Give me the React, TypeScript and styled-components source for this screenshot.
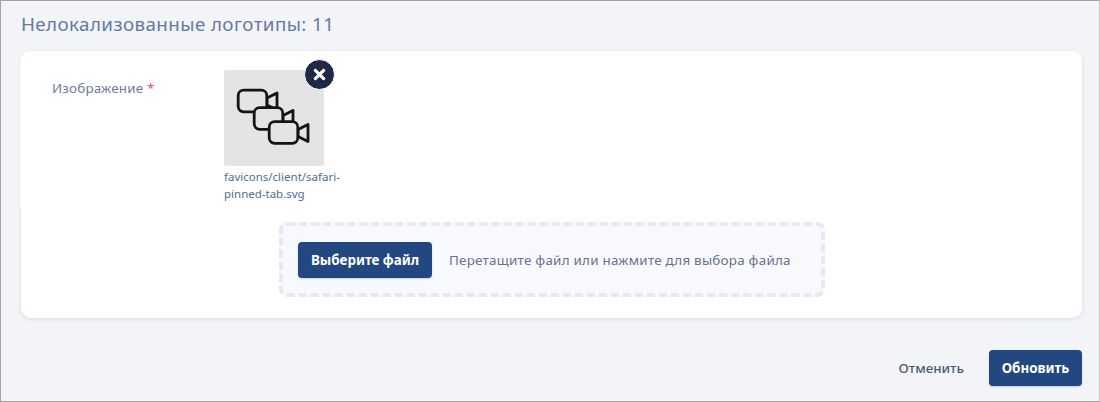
import styled, { createGlobalStyle } from "styled-components";
import { FaTimes } from "react-icons/fa";

const Global = createGlobalStyle`
  html, body { margin: 0; padding: 0; }
  body {
    width: 1100px;
    height: 402px;
    overflow: hidden;
    font-family: "Noto Sans", "Open Sans", sans-serif;
  }
`;

const Frame = styled.div`
  box-sizing: border-box;
  width: 1100px;
  height: 402px;
  padding: 0 17px 14px 20px;
  display: flex;
  flex-direction: column;
  background: #f3f4f8;
  border: 1px solid #a3a3a3;
  border-right-color: #c4c4c4;
`;

const Title = styled.h2`
  margin: 0;
  height: 50px;
  line-height: 47px;
  font-size: 18.8px;
  letter-spacing: 0.4px;
  font-weight: 400;
  color: #667b9c;
`;

const Card = styled.section`
  height: 267px;
  border-radius: 10px;
  background: #fff;
  box-shadow: 0 1px 4px rgba(30, 40, 70, 0.12);
  display: flex;
  flex-direction: column;
`;

const ImageRow = styled.div`
  box-sizing: border-box;
  height: 156px;
  margin-left: -1px;
  padding: 19px 0 0 32px;
  display: flex;
  background: #fff;
  border-radius: 10px 10px 0 0;
`;

const Label = styled.div`
  width: 172px;
  padding-top: 9px;
  font-size: 13.4px;
  letter-spacing: 0.2px;
  line-height: 18px;
  color: #6b7c97;
`;

const Required = styled.span`
  color: #e25563;
`;

const Preview = styled.div`
  position: relative;
  width: 124px;
`;

const Thumb = styled.div`
  width: 100px;
  height: 96px;
  border-radius: 2px;
  background: #e4e4e4;
  display: flex;
  align-items: center;
  justify-content: center;
`;

const RemoveButton = styled.button`
  position: absolute;
  top: -11px;
  left: 80px;
  box-sizing: content-box;
  width: 29px;
  height: 29px;
  padding: 0;
  border: 1px solid #fff;
  border-radius: 50%;
  background: #1e2a45;
  color: #fff;
  display: flex;
  align-items: center;
  justify-content: center;
  font-size: 17px;
`;

const FileName = styled.div`
  margin-top: 2px;
  font-size: 11.5px;
  line-height: 17px;
  color: #536b91;
`;

const DropRow = styled.div`
  display: flex;
  justify-content: center;
  padding-top: 15px;
  margin-left: 1px;
`;

const DropZone = styled.div`
  box-sizing: border-box;
  width: 546px;
  height: 75px;
  padding: 0 15px;
  display: flex;
  align-items: center;
  gap: 17px;
  border: 4px dashed #e6e8f2;
  border-radius: 8px;
  background: #f8f9fd;
`;

const PrimaryButton = styled.button<{ width: number }>`
  width: ${({ width }) => width}px;
  height: 36px;
  padding: 0;
  border: 0;
  border-radius: 4px;
  background: #234781;
  color: #fff;
  font-family: inherit;
  font-size: 13.4px;
  font-weight: 700;
  box-shadow: 0 1px 2px rgba(30, 40, 70, 0.2);
`;

const DropHint = styled.span`
  font-size: 13.4px;
  letter-spacing: 0.25px;
  color: #64748f;
`;

const Footer = styled.footer`
  margin-top: 32px;
  display: flex;
  justify-content: flex-end;
  align-items: center;
  gap: 25px;
`;

const CancelButton = styled.button`
  padding: 0;
  border: 0;
  background: none;
  color: #4a5a76;
  font-family: inherit;
  font-size: 13.4px;
  font-weight: 500;
`;

function CameraStack() {
  const cam = (x: number, y: number) => (
    <g key={x} transform={`translate(${x} ${y})`} fill="#e4e4e4" stroke="#141414" strokeWidth="2.8" strokeLinejoin="round">
      <path d="M29 8 L39 3 V20 L29 15 Z" />
      <rect x="0.2" y="0.2" width="28.6" height="21.6" rx="5.5" />
    </g>
  );
  return (
    <svg width="76" height="60" viewBox="0 0 76 60">
      {cam(2, 2)}
      {cam(18, 19.5)}
      {cam(33, 33.5)}
      <rect x="57" y="5" width="1" height="1" fill="#bbb" />
    </svg>
  );
}

export default function App() {
  return (
    <Frame>
      <Global />
      <Title>Нелокализованные логотипы: 11</Title>
      <Card>
        <ImageRow>
          <Label>
            Изображение <Required>*</Required>
          </Label>
          <Preview>
            <Thumb>
              <CameraStack />
            </Thumb>
            <RemoveButton aria-label="Удалить">
              <FaTimes />
            </RemoveButton>
            <FileName>favicons/client/safari-pinned-tab.svg</FileName>
          </Preview>
        </ImageRow>
        <DropRow>
          <DropZone>
            <PrimaryButton width={134}>Выберите файл</PrimaryButton>
            <DropHint>Перетащите файл или нажмите для выбора файла</DropHint>
          </DropZone>
        </DropRow>
      </Card>
      <Footer>
        <CancelButton>Отменить</CancelButton>
        <PrimaryButton width={93}>Обновить</PrimaryButton>
      </Footer>
    </Frame>
  );
}
